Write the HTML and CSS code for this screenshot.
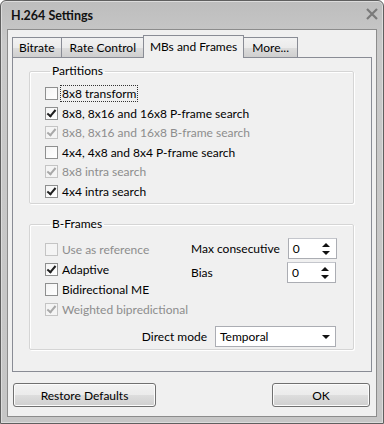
FILE: index.html
```html
<!DOCTYPE html>
<html lang="en">
<head>
    <meta charset="UTF-8">
    <title>H.264 Settings</title>
    <link rel="stylesheet" href="styles.css">
</head>
<body>
    <div class="window">
        <div class="titlebar">
            <span class="title">H.264 Settings</span>
            <svg class="close" width="14" height="14" viewBox="0 0 14 14">
                <path d="M2 2 L12 12 M12 2 L2 12" stroke="#7a7a7a" stroke-width="2.2"/>
            </svg>
        </div>

        <div class="client">
            <div class="tabs">
                <div class="tab">Bitrate</div>
                <div class="tab wide">Rate Control</div>
                <div class="tab active">MBs and Frames</div>
                <div class="tab wide">More...</div>
            </div>

            <div class="panel">
                <fieldset class="group">
                    <legend>Partitions</legend>
                    <div class="check-list">
                        <label class="check"><span class="box"></span><span class="focus">8x8 transform</span></label>
                        <label class="check"><span class="box on"></span>8x8, 8x16 and 16x8 P-frame search</label>
                        <label class="check disabled"><span class="box on"></span>8x8, 8x16 and 16x8 B-frame search</label>
                        <label class="check"><span class="box"></span>4x4, 4x8 and 8x4 P-frame search</label>
                        <label class="check disabled"><span class="box on"></span>8x8 intra search</label>
                        <label class="check"><span class="box on"></span>4x4 intra search</label>
                    </div>
                </fieldset>

                <fieldset class="group bframes">
                    <legend>B-Frames</legend>
                    <div class="bf-top">
                        <div class="check-list">
                            <label class="check disabled"><span class="box"></span>Use as reference</label>
                            <label class="check"><span class="box on"></span>Adaptive</label>
                            <label class="check"><span class="box"></span>Bidirectional ME</label>
                            <label class="check disabled"><span class="box on"></span>Weighted bipredictional</label>
                        </div>
                        <div class="spins">
                            <div class="spin-row">
                                <span class="spin-label">Max consecutive</span>
                                <span class="spin"><span class="spin-val">0</span><span class="arrows"><i class="up"></i><i class="down"></i></span></span>
                            </div>
                            <div class="spin-row">
                                <span class="spin-label">Bias</span>
                                <span class="spin"><span class="spin-val">0</span><span class="arrows"><i class="up"></i><i class="down"></i></span></span>
                            </div>
                        </div>
                    </div>
                    <div class="direct">
                        <span>Direct mode</span>
                        <span class="combo"><span>Temporal</span><i class="down"></i></span>
                    </div>
                </fieldset>
            </div>

            <div class="buttons">
                <button class="btn restore">Restore Defaults</button>
                <button class="btn ok">OK</button>
            </div>
        </div>
    </div>
</body>
</html>
```

FILE: styles.css
```css
* {
    margin: 0;
    padding: 0;
    box-sizing: border-box;
}

body {
    font-family: Lato, "Open Sans", sans-serif;
    font-size: 12px;
    color: #000;
    background: #fff;
}

.window {
    width: 384px;
    height: 424px;
    border: 1px solid #5f5f5f;
    border-radius: 6px 6px 0 0;
    background: linear-gradient(180deg, #bdbdbd 0%, #c9c9c9 10%, #c6c6c6 100%);
    box-shadow: inset 0 0 0 1px #dcdcdc;
    display: flex;
    flex-direction: column;
}

.titlebar {
    height: 28px;
    display: flex;
    align-items: center;
    justify-content: space-between;
    padding: 0 4px 0 10px;
}

.title {
    font-weight: bold;
    font-size: 12.5px;
    color: #111;
}

.close {
    margin-top: -2px;
}

.client {
    flex: 1;
    margin: 0 6px 6px 6px;
    background: #f0f0f0;
    border: 1px solid #8c8c8c;
    padding: 5px 4px 0 4px;
    display: flex;
    flex-direction: column;
}

.tabs {
    display: flex;
    align-items: flex-end;
    height: 22px;
    position: relative;
    z-index: 1;
}

.tab {
    height: 20px;
    padding: 0 6px;
    line-height: 19px;
    border: 1px solid #898c95;
    border-bottom: none;
    margin-right: -1px;
    background: linear-gradient(180deg, #f2f2f2 0%, #ebebeb 50%, #dddddd 51%, #cfcfcf 100%);
    white-space: nowrap;
}

.tab.wide {
    padding: 0 8px;
}

.tab.active {
    height: 23px;
    margin: 0 -1px -1px -1px;
    padding: 0 6px;
    line-height: 21px;
    background: #f0f0f0;
    position: relative;
}

.panel {
    height: 315px;
    border: 1px solid #898c95;
    background: #f0f0f0;
    padding: 6px 17px 0 16px;
}

.group {
    border: 1px solid #d5d5d5;
    border-radius: 2px;
    box-shadow: 1px 1px 0 #fff inset, 1px 1px 0 #fff;
    padding: 7px 0 0 15px;
    height: 140px;
}

.group legend {
    padding: 0 2px;
    margin-left: 5px;
    line-height: 14px;
}

.check-list {
    display: flex;
    flex-direction: column;
    gap: 2.6px;
}

.bframes .check-list {
    gap: 3px;
}

.check {
    display: flex;
    align-items: center;
    height: 17px;
    gap: 4px;
    white-space: nowrap;
}

.check.disabled {
    color: #8d8d8d;
}

.focus {
    outline: 1px dotted #333;
    outline-offset: 0;
    padding: 0 1px;
    margin-left: -1px;
}

.box {
    width: 13px;
    height: 13px;
    border: 1px solid #8e8f8f;
    background: linear-gradient(135deg, #f4f4f4 0%, #ffffff 100%);
    flex-shrink: 0;
    position: relative;
}

.disabled .box {
    border-color: #c4c4c4;
    background: #f4f4f4;
}

.box.on::after {
    content: "";
    position: absolute;
    left: 3px;
    top: 0px;
    width: 3px;
    height: 7px;
    border-right: 2px solid #1e1e1e;
    border-bottom: 2px solid #1e1e1e;
    transform: rotate(40deg);
}

.disabled .box.on::after {
    border-color: #a8a8a8;
}

.bframes {
    margin-top: 13px;
    height: 133px;
    padding-top: 10px;
}

.bf-top {
    display: flex;
    justify-content: space-between;
}

.spins {
    width: 162px;
    flex-shrink: 0;
    display: flex;
    flex-direction: column;
    gap: 3px;
    margin-top: -3px;
    padding-right: 17px;
}

.spin-row {
    display: flex;
    align-items: flex-start;
    justify-content: space-between;
    gap: 8px;
}

.spin-label {
    line-height: 20px;
    margin-top: 1px;
    white-space: nowrap;
}

.spin {
    width: 49px;
    height: 21px;
    flex-shrink: 0;
    border: 1px solid #abadb3;
    border-top-color: #c4c6cc;
    background: #fff;
    display: flex;
    align-items: center;
    justify-content: space-between;
    padding: 0 6px 0 4px;
}

.arrows {
    display: flex;
    flex-direction: column;
    gap: 4px;
}

.up, .down {
    display: block;
    width: 0;
    height: 0;
    border-left: 4px solid transparent;
    border-right: 4px solid transparent;
}

.up {
    border-bottom: 4px solid #111;
}

.down {
    border-top: 4px solid #111;
}

.direct {
    display: flex;
    align-items: center;
    justify-content: flex-end;
    gap: 8px;
    margin-top: 8px;
    padding-right: 17px;
}

.combo {
    width: 121px;
    height: 21px;
    border: 1px solid #abadb3;
    background: #fff;
    display: flex;
    align-items: center;
    justify-content: space-between;
    padding: 0 5px 0 4px;
}

.buttons {
    display: flex;
    justify-content: space-between;
    margin-top: 11px;
    padding: 0 2px 0 1px;
}

.btn {
    font-family: inherit;
    font-size: 12px;
    height: 24px;
    border: 1px solid #707070;
    border-radius: 3px;
    background: linear-gradient(180deg, #f2f2f2 0%, #ebebeb 50%, #dddddd 51%, #cfcfcf 100%);
    box-shadow: inset 0 0 0 1px #fcfcfc;
    color: #000;
}

.restore {
    width: 143px;
}

.ok {
    width: 98px;
}
```
